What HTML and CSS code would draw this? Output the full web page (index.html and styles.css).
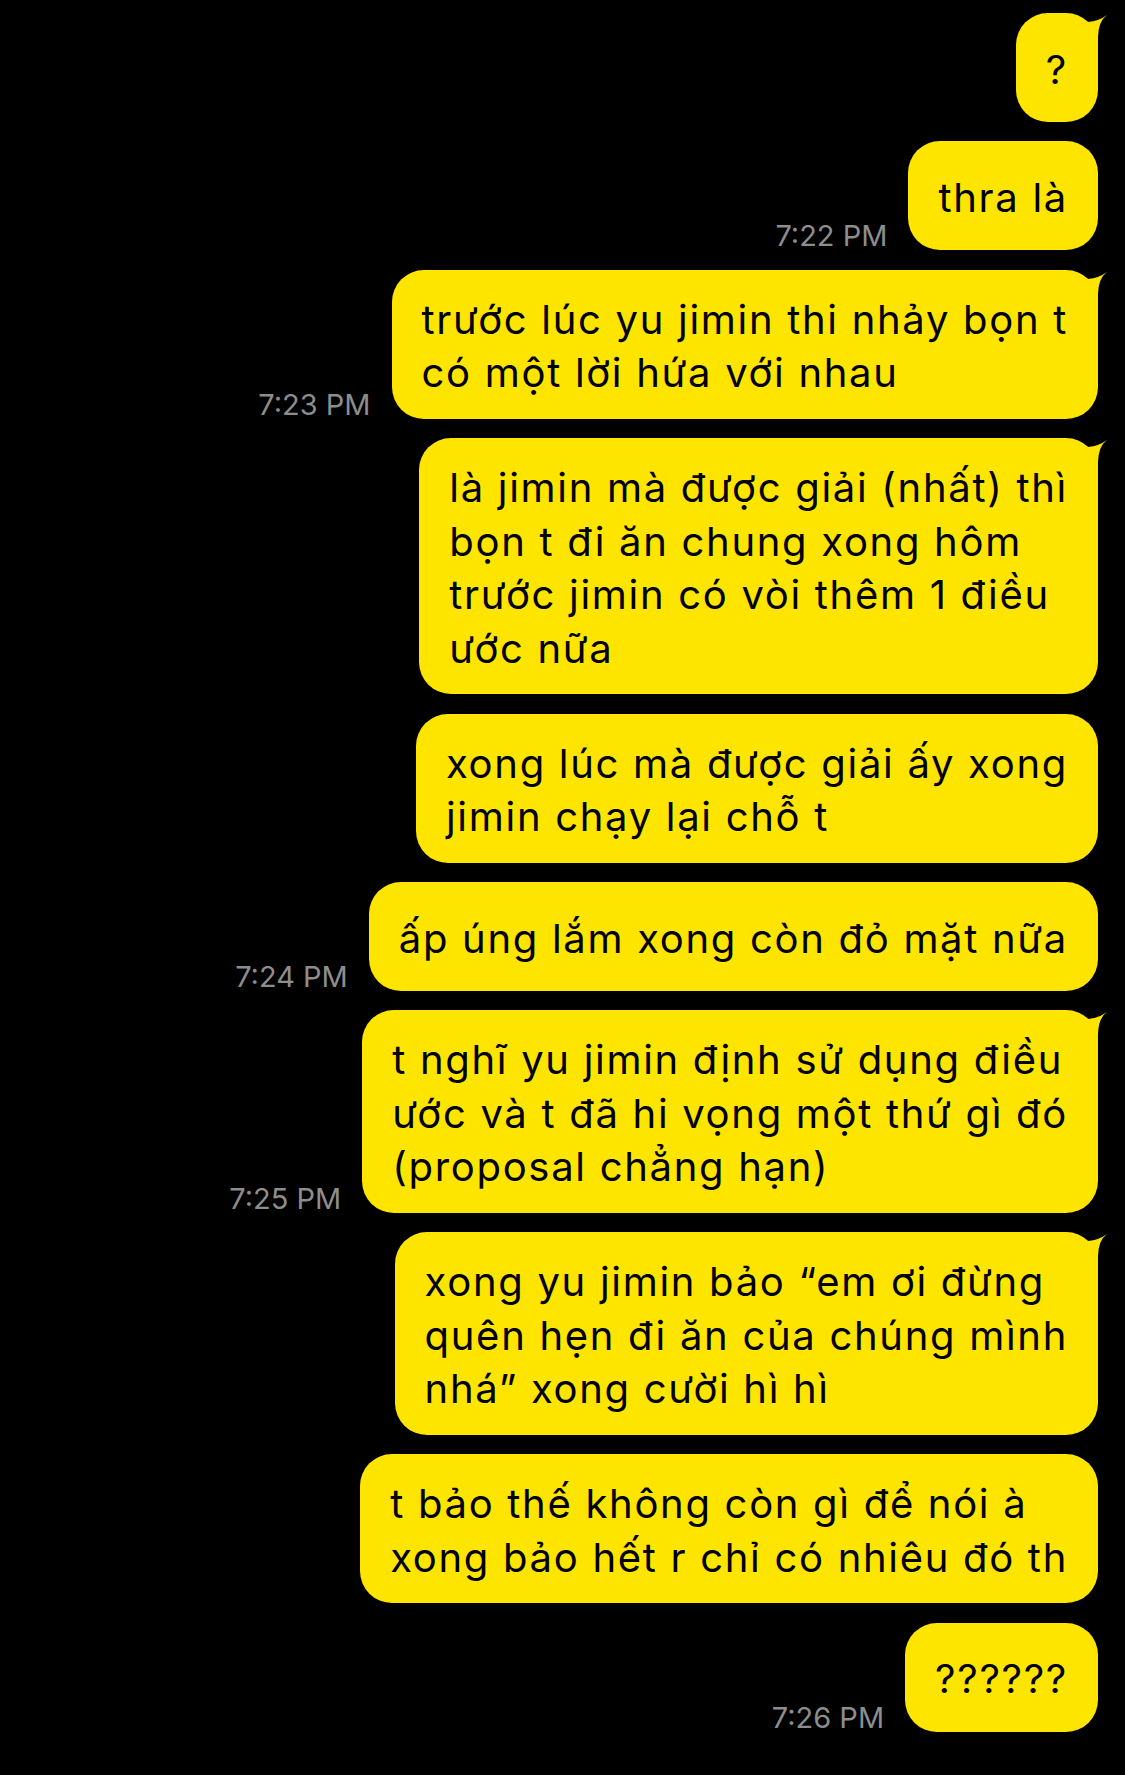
FILE: index.html
```html
<!DOCTYPE html>
<html lang="vi">
<head>
    <meta charset="UTF-8">
    <meta name="viewport" content="width=device-width, initial-scale=1.0">
    <title>Chat</title>
    <link rel="stylesheet" href="styles.css">
</head>
<body>
    <div class="chat">
        <div class="row">
            <div class="bubble tailed">?
                <svg class="tail" viewBox="0 0 24 36"><path d="M0 36 L0 12 Q1 9 4 9 Q15 8 23 2 Q14.5 8 14 24 L14 36 Z"/></svg>
            </div>
        </div>

        <div class="row">
            <span class="time">7:22 PM</span>
            <div class="bubble">thra là</div>
        </div>

        <div class="row">
            <span class="time">7:23 PM</span>
            <div class="bubble tailed">trước lúc yu jimin thi nhảy bọn t<br>có một lời hứa với nhau
                <svg class="tail" viewBox="0 0 24 36"><path d="M0 36 L0 12 Q1 9 4 9 Q15 8 23 2 Q14.5 8 14 24 L14 36 Z"/></svg>
            </div>
        </div>

        <div class="row">
            <div class="bubble tailed">là jimin mà được giải (nhất) thì<br>bọn t đi ăn chung xong hôm<br>trước jimin có vòi thêm 1 điều<br>ước nữa
                <svg class="tail" viewBox="0 0 24 36"><path d="M0 36 L0 12 Q1 9 4 9 Q15 8 23 2 Q14.5 8 14 24 L14 36 Z"/></svg>
            </div>
        </div>

        <div class="row">
            <div class="bubble">xong lúc mà được giải ấy xong<br>jimin chạy lại chỗ t</div>
        </div>

        <div class="row">
            <span class="time">7:24 PM</span>
            <div class="bubble">ấp úng lắm xong còn đỏ mặt nữa</div>
        </div>

        <div class="row">
            <span class="time">7:25 PM</span>
            <div class="bubble tailed">t nghĩ yu jimin định sử dụng điều<br>ước và t đã hi vọng một thứ gì đó<br>(proposal chẳng hạn)
                <svg class="tail" viewBox="0 0 24 36"><path d="M0 36 L0 12 Q1 9 4 9 Q15 8 23 2 Q14.5 8 14 24 L14 36 Z"/></svg>
            </div>
        </div>

        <div class="row">
            <div class="bubble tailed">xong yu jimin bảo “em ơi đừng<br>quên hẹn đi ăn của chúng mình<br>nhá” xong cười hì hì
                <svg class="tail" viewBox="0 0 24 36"><path d="M0 36 L0 12 Q1 9 4 9 Q15 8 23 2 Q14.5 8 14 24 L14 36 Z"/></svg>
            </div>
        </div>

        <div class="row">
            <div class="bubble">t bảo thế không còn gì để nói à<br>xong bảo hết r chỉ có nhiêu đó th</div>
        </div>

        <div class="row">
            <span class="time">7:26 PM</span>
            <div class="bubble">??????</div>
        </div>
    </div>
</body>
</html>
```

FILE: styles.css
```css
html, body {
    margin: 0;
    padding: 0;
    background-color: #000;
}

body {
    font-family: Inter, "Noto Sans", sans-serif;
    -webkit-font-smoothing: antialiased;
}

.chat {
    display: flex;
    flex-direction: column;
    gap: 19.4px;
    padding: 13px 27px 40px 0;
}

.row {
    display: flex;
    justify-content: flex-end;
    align-items: flex-end;
    gap: 21px;
}

.time {
    font-size: 29px;
    line-height: 1;
    color: #8d8d8d;
    white-space: nowrap;
}

.bubble {
    position: relative;
    display: flex;
    flex-direction: column;
    justify-content: center;
    box-sizing: border-box;
    min-height: 109px;
    padding: 23px 30px 19px;
    background-color: #fee500;
    color: #000;
    border-radius: 32px;
    font-size: 40px;
    letter-spacing: 1.7px;
    line-height: 53.5px;
    white-space: nowrap;
}

.bubble .tail {
    position: absolute;
    top: 0;
    right: -10px;
    width: 24px;
    height: 36px;
    fill: #fee500;
}
```
